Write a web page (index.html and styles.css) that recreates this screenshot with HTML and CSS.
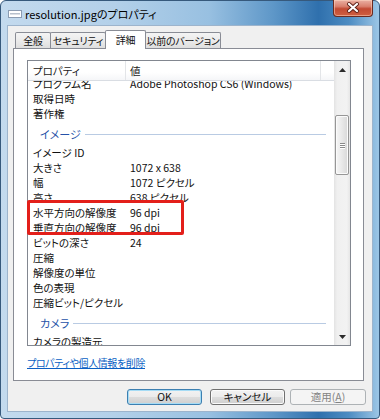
FILE: index.html
```html
<!DOCTYPE html>
<html lang="ja">
<head>
<meta charset="utf-8">
<title>resolution.jpgのプロパティ</title>
<link rel="stylesheet" href="styles.css">
</head>
<body>
<div class="window">
  <div class="titlebar">
    <svg class="appicon" width="14" height="8" viewBox="0 0 14 8">
      <rect x="0.5" y="0.5" width="13" height="7" fill="#ffffff" stroke="#8b9cb2"/>
      <rect x="2" y="3" width="10" height="1.5" fill="#b7c0cc"/>
    </svg>
    <span class="title">resolution.jpgのプロパティ</span>
    <div class="close">
      <svg width="38" height="16" viewBox="0 0 38 16">
        <path d="M15 4 L23 11 M23 4 L15 11" stroke="#5b1f16" stroke-width="4" stroke-linecap="round"/>
        <path d="M15 4 L23 11 M23 4 L15 11" stroke="#ffffff" stroke-width="2.2" stroke-linecap="round"/>
      </svg>
    </div>
  </div>
  <div class="client">
    <div class="tabs">
      <div class="tab w1">全般</div>
      <div class="tab w2">セキュリティ</div>
      <div class="tab w3 active">詳細</div>
      <div class="tab w4">以前のバージョン</div>
    </div>
    <div class="panel">
      <div class="listbox">
        <div class="listmain">
          <div class="header">
            <div class="hcol c1">プロパティ</div>
            <div class="hcol c2">値</div>
            <div class="hcol c3"></div>
          </div>
          <div class="rows">
            <div class="row first"><span class="k">プログラム名</span><span class="v">Adobe Photoshop CS6 (Windows)</span></div>
            <div class="row"><span class="k">取得日時</span><span class="v"></span></div>
            <div class="row"><span class="k">著作権</span><span class="v"></span></div>
            <div class="group"><span>イメージ</span><i></i></div>
            <div class="row"><span class="k">イメージ ID</span><span class="v"></span></div>
            <div class="row"><span class="k">大きさ</span><span class="v">1072 x 638</span></div>
            <div class="row"><span class="k">幅</span><span class="v">1072 ピクセル</span></div>
            <div class="row"><span class="k">高さ</span><span class="v">638 ピクセル</span></div>
            <div class="row"><span class="k">水平方向の解像度</span><span class="v">96 dpi</span></div>
            <div class="row"><span class="k">垂直方向の解像度</span><span class="v">96 dpi</span></div>
            <div class="row"><span class="k">ビットの深さ</span><span class="v">24</span></div>
            <div class="row"><span class="k">圧縮</span><span class="v"></span></div>
            <div class="row"><span class="k">解像度の単位</span><span class="v"></span></div>
            <div class="row"><span class="k">色の表現</span><span class="v"></span></div>
            <div class="row"><span class="k">圧縮ビット/ピクセル</span><span class="v"></span></div>
            <div class="group"><span>カメラ</span><i></i></div>
            <div class="row"><span class="k">カメラの製造元</span><span class="v"></span></div>
          </div>
        </div>
        <div class="scrollbar">
          <div class="sbtn">
            <svg width="7" height="4" viewBox="0 0 7 4"><path d="M0 4 L3.5 0 L7 4 Z" fill="#2b2b2b"/></svg>
          </div>
          <div class="thumb"><span></span><span></span><span></span></div>
          <div class="track"></div>
          <div class="sbtn">
            <svg width="7" height="4" viewBox="0 0 7 4"><path d="M0 0 L7 0 L3.5 4 Z" fill="#2b2b2b"/></svg>
          </div>
        </div>
        <div class="highlight"></div>
      </div>
      <a class="link" href="#">プロパティや個人情報を削除</a>
    </div>
    <div class="buttons">
      <div class="btn ok">OK</div>
      <div class="btn cancel">キャンセル</div>
      <div class="btn apply">適用(<u>A</u>)</div>
    </div>
  </div>
</div>
</body>
</html>
```

FILE: styles.css
```css
* { box-sizing: border-box; }

html, body {
  margin: 0;
  padding: 0;
  background: #ffffff;
}

body {
  width: 380px;
  height: 419px;
  overflow: hidden;
  font-family: "Noto Sans CJK JP", "Noto Sans", sans-serif;
  font-feature-settings: "palt";
  font-size: 10.5px;
  color: #111111;
}

.window {
  width: 380px;
  height: 419px;
  padding: 0 6px 6px;
  border: 1px solid #36597c;
  border-radius: 6px 6px 4px 4px;
  background: linear-gradient(to right, #c3daee 0%, #b3d0e9 30%, #98c0e1 55%, #5e97c8 72%, #2f70ad 84%, #4d8cc2 92%, #9cc6e6 100%);
  display: flex;
  flex-direction: column;
}

.titlebar {
  height: 24px;
  display: flex;
  align-items: center;
  padding-left: 1px;
}

.appicon {
  flex: none;
  margin-right: 3px;
  margin-top: 2px;
}

.title {
  font-size: 11px;
  color: #000000;
  margin-top: 1px;
  white-space: nowrap;
}

.close {
  margin-left: auto;
  align-self: flex-start;
  margin-top: -1px;
  width: 40px;
  height: 17px;
  border: 1px solid #6a2a20;
  border-top: none;
  border-radius: 0 0 4px 4px;
  background: linear-gradient(#eab0a3 0%, #d9806e 40%, #c24a33 55%, #cf5f40 100%);
  box-shadow: inset 0 0 0 1px rgba(255, 220, 200, 0.5);
  display: flex;
  align-items: center;
  justify-content: center;
}

.client {
  flex: 1;
  background: #f0f0f0;
  border: 1px solid #9db4cc;
  display: flex;
  flex-direction: column;
}

.tabs {
  height: 22px;
  display: flex;
  align-items: flex-end;
  padding-left: 7px;
}

.tab {
  height: 16px;
  border: 1px solid #898c95;
  border-bottom: none;
  border-radius: 2px 2px 0 0;
  background: linear-gradient(#f4f4f4 0%, #ebebeb 50%, #dedede 100%);
  display: flex;
  align-items: center;
  justify-content: center;
  font-size: 10px;
  line-height: 12px;
  letter-spacing: -0.2px;
  color: #111111;
  white-space: nowrap;
}

.tab + .tab { margin-left: -1px; }

.w1 { width: 36px; }
.w2 { width: 56px; }
.w3 { width: 41px; }
.w4 { width: 76px; }

.tab.active {
  height: 19px;
  margin-bottom: -1px;
  background: #ffffff;
  position: relative;
  z-index: 1;
  padding-bottom: 1px;
}

.panel {
  height: 333px;
  margin: 0 8px 0 5px;
  border: 1px solid #898c95;
  background: #ffffff;
  padding: 11px 0 0 13px;
}

.listbox {
  width: 324px;
  height: 286px;
  border: 1px solid #828790;
  background: #ffffff;
  display: flex;
  position: relative;
}

.listmain {
  width: 306px;
  display: flex;
  flex-direction: column;
  overflow: hidden;
}

.header {
  height: 20px;
  flex: none;
  display: flex;
  border-bottom: 1px solid #d9dde3;
  background: linear-gradient(#ffffff 0%, #ffffff 60%, #f5f6f8 100%);
  position: relative;
  z-index: 1;
}

.hcol {
  height: 100%;
  display: flex;
  align-items: center;
  border-right: 1px solid #e3e5e8;
  white-space: nowrap;
  color: #1a1a1a;
}

.c1 { width: 98px; padding-left: 5px; }
.c2 { width: 195px; padding-left: 4px; }
.c3 { flex: 1; border-right: none; }

.rows {
  flex: 1;
  overflow: hidden;
}

.row {
  height: 15px;
  display: flex;
  align-items: center;
  padding-left: 5px;
  white-space: nowrap;
  color: #111111;
}

.row.first { margin-top: -5.5px; }

.k {
  width: 97px;
  flex: none;
}

.v { flex: 1; }

.group {
  height: 24px;
  display: flex;
  align-items: center;
  padding: 3px 8px 0 12px;
}

.group span {
  color: #2652a8;
  font-size: 11px;
  white-space: nowrap;
}

.group i {
  flex: 1;
  height: 1px;
  margin-left: 4px;
  margin-top: 1px;
  background: #b9cbe3;
}

.scrollbar {
  width: 16px;
  display: flex;
  flex-direction: column;
  background: linear-gradient(to right, #e3e3e3 0%, #f0f0f0 20%, #f2f2f2 80%, #e6e6e6 100%);
}

.sbtn {
  height: 17px;
  flex: none;
  display: flex;
  align-items: center;
  justify-content: center;
}

.thumb {
  height: 60px;
  margin: 37px 1px 0;
  flex: none;
  border: 1px solid #969696;
  border-radius: 2px;
  background: linear-gradient(to right, #f6f6f6 0%, #e8e8e8 50%, #d8d8d8 100%);
  box-shadow: inset 0 0 0 1px #fbfbfb;
  display: flex;
  flex-direction: column;
  align-items: center;
  justify-content: center;
  gap: 1px;
}

.thumb span {
  width: 5px;
  height: 1px;
  background: #8a8a8a;
  box-shadow: 0 1px 0 #ffffff;
}

.track { flex: 1; }

.highlight {
  position: absolute;
  left: -1px;
  top: 139px;
  width: 157px;
  height: 35px;
  border: 3px solid #e31f1a;
  border-radius: 2px;
}

.link {
  display: block;
  margin-top: 11px;
  line-height: 12px;
  color: #0a5fc4;
  text-decoration: underline;
  font-size: 10px;
  letter-spacing: -0.4px;
  white-space: nowrap;
}

.buttons {
  margin-top: 8px;
  height: 16px;
  display: flex;
  justify-content: flex-end;
  padding-right: 6px;
}

.btn {
  height: 16px;
  border: 1px solid #707070;
  border-radius: 3px;
  background: linear-gradient(#f2f2f2 0%, #ebebeb 50%, #dddddd 51%, #cfcfcf 100%);
  box-shadow: inset 0 0 0 1px #fafafa;
  display: flex;
  align-items: center;
  justify-content: center;
  font-size: 10.5px;
  line-height: 12px;
  color: #111111;
}

.btn u { text-decoration: underline; }

.ok {
  width: 75px;
  border-color: #3c7fb1;
  box-shadow: inset 0 0 0 1px #a6dcf5;
}

.cancel {
  width: 75px;
  margin-left: 8px;
}

.apply {
  width: 76px;
  margin-left: 5px;
  border-color: #adb2b5;
  background: #f4f4f4;
  box-shadow: none;
  color: #838383;
}
```
